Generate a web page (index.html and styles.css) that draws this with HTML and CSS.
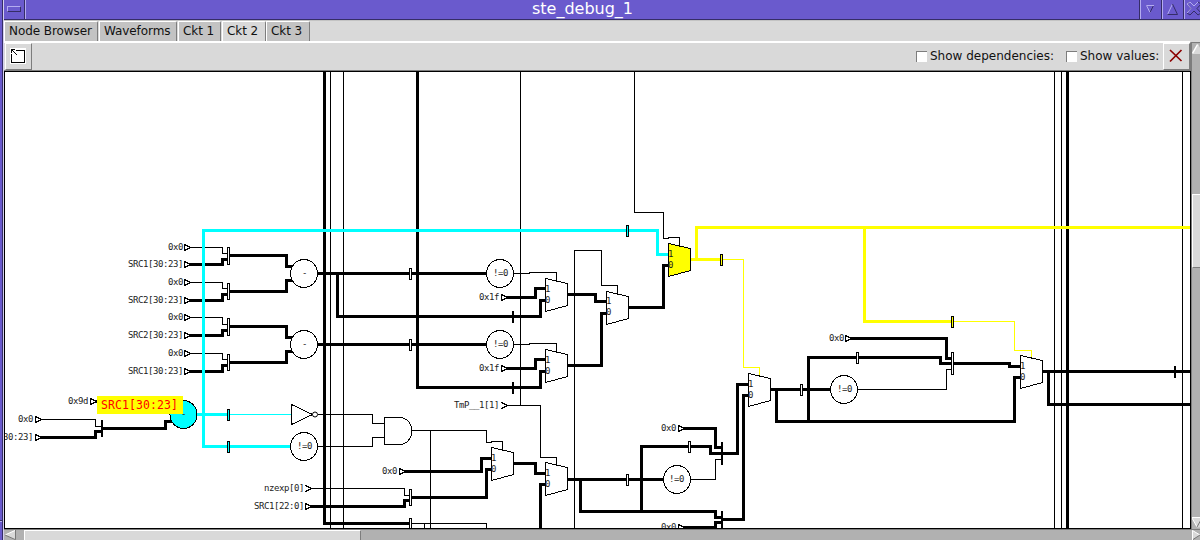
FILE: index.html
```html
<!DOCTYPE html>
<html lang="en">
<head>
<meta charset="utf-8">
<title>ste_debug_1</title>
<link rel="stylesheet" href="styles.css">
</head>
<body>
<div class="window">
  <div class="frame-edge"><i class="notch"></i></div>
  <div class="main">
    <header class="titlebar">
      <div class="wbtn menu"><i></i></div>
      <h1 class="title"><span>ste_debug_1</span></h1>
      <div class="wbtn"><svg width="20" height="19"><path d="M5.500 5.500H12.500L9 12.500" class="lo2"/><path d="M13 5.500H5.500L9 12.500" class="hi"/></svg></div>
      <div class="wbtn"><svg width="20" height="19"><path d="M4.500 14.500L9.500 4" class="hi"/><path d="M9.500 4L14.500 14.500H4.500" class="lo2"/></svg></div>
      <div class="wbtn"><svg width="20" height="19"><path d="M2 4L5 2L9 6L13 2L16 4L12 8.500L16 13L13 15L9 11L5 15L2 13L6 8.500Z" class="lo2"/><path d="M6 8.500L2 4L5 2L9 6L13 2M2 13L6 8.500" class="hi"/></svg></div>
    </header>
    <nav class="tabs">
      <div class="tab t1"><span>Node Browser</span></div>
      <div class="tab t2"><span>Waveforms</span></div>
      <div class="tab t3"><span>Ckt 1</span></div>
      <div class="tab t4 active"><span>Ckt 2</span></div>
      <div class="tab t5"><span>Ckt 3</span></div>
    </nav>
    <div class="workspace">
      <div class="left-col">
        <div class="toolbar">
          <div class="tool"><svg width="16" height="16" shape-rendering="crispEdges"><path d="M0 0H16V16H0Z" fill="#fff"/><path d="M6 2.500H14.500V14.500H1.500V6" fill="none" stroke="#000"/><path d="M1 1h4v1h-4zM1 1h1v4h-1zM2 2h1v1h-1zM3 3h1v1h-1zM4 4h1v1h-1zM5 5h1v1h-1zM6 6h1v1h-1z" fill="#000"/></svg></div>
          <div class="spacer"></div>
          <label class="check c1"><i></i><span>Show dependencies:</span></label>
          <label class="check c2"><i></i><span>Show values:</span></label>
          <div class="close"><svg width="14" height="14"><path d="M1 1L12.500 12M12.500 1L1 12.500" stroke="#8b0000" stroke-width="1.700"/></svg></div>
        </div>
        <svg class="canvas" width="1187" height="458" viewBox="4 71 1187 458">
          <defs>
            <rect id="bar" x="-1" y="-5" width="2" height="11"/>
            <path id="tick" d="M0 -5V7" stroke-width="2"/>
            <path id="mux" d="M0 0L22 5V27L0 33Z"/>
            <path id="pin" d="M0 -3L6 0L0 3Z"/>
            <ellipse id="node" cx="-.5" rx="13.500" ry="14"/>
          </defs>
          <g transform="translate(.5 .5)">
            <!-- single-bit nets -->
            <g class="net thin">
              <path d="M330 71V529M343 71V529M520 71V405M1054 71V529M1061 71V529M1182 71V529"/>
              <path d="M190 247H222V253H227M190 282H222V288H227M190 317H222V324H227M190 353H222V359H227"/>
              <path d="M512 273H529V272H556V281M512 344H529V343H556V352"/>
              <path d="M574 529V250H601V285H617V294M634 71V212H663V238H668V237H679V246"/>
              <path d="M317 414H372V423H384M316 446H372V437H384M411 430H486V442H491V441H502V450M430 430V529"/>
              <path d="M311 488H404V495H409M411 523H486V529M424 523V529M507 405H540V457H556V465"/>
              <path d="M41 419H95V426H101M689 479H715V459H721M856 389H946V369H951"/>
            </g>
            <!-- multi-bit buses -->
            <g class="net bus">
              <path d="M324 71V523H410M417 71V387H540V371H545M1067 71V529"/>
              <path d="M188 264H222V259H227M188 300H222V294H227M188 335H222V330H227M188 371H222V365H227"/>
              <path d="M229 255H286V266H292M229 291H286V280H292M229 326H286V337H292M229 362H286V351H292"/>
              <path d="M316 273H487M316 344H487M337 273V316H540V300H545"/>
              <path d="M506 297H535V288H545M506 368H535V359H545"/>
              <path d="M566 294H595V301H606M566 365H601V313H606M627 307H663V265H668"/>
              <path d="M403 471H481V458H491M411 497H486V469H491M512 463H535V473H545M540 529V484H545"/>
              <path d="M310 506H404V500H409M40 437H95V431H101M102 428H165V421H172M94 401H98"/>
              <path d="M566 479H664M580 479V511H715V517H721M641 511V446H710V453H737V384H748"/>
              <path d="M682 428H715V447H721M682 527H715V522H721M722 519H743V395H748"/>
              <path d="M769 389H831M776 389V421H1014V377H1020M808 421V357H940V363H951"/>
              <path d="M850 338H946V358H951M953 363H1009V366H1020M1041 371H1191M1048 371V404H1191"/>
            </g>
            <!-- selected nets -->
            <g class="net bus cyan"><path d="M291 446H203V230H657V254H668M195 414H229"/></g>
            <path class="net thin cyan" d="M229 414H291"/>
            <g class="net bus yellow"><path d="M689 259H721M696 259V227H1190M864 227V321H952"/></g>
            <path class="net thin yellow" d="M722 259H743V367H759V375M953 321H1014V350H1031V358"/>
            <!-- net markers -->
            <g class="shape">
              <use href="#bar" x="410" y="273"/><use href="#bar" x="410" y="344"/><use href="#bar" x="410" y="523"/>
              <use href="#bar" x="627" y="479"/><use href="#bar" x="689" y="446"/><use href="#bar" x="801" y="389"/><use href="#bar" x="857" y="357"/>
              <path d="M227 247h2v17h-2zM227 283h2v16h-2zM227 318h2v17h-2zM227 354h2v16h-2zM409 489h2v16h-2zM951 352h2v22h-2z"/>
            </g>
            <g class="shape sel-cyan"><use href="#bar" x="228" y="414"/><use href="#bar" x="228" y="446"/><use href="#bar" x="627" y="230"/></g>
            <g class="shape sel-yellow"><use href="#bar" x="721" y="259"/><use href="#bar" x="952" y="321"/></g>
            <g class="tick"><use href="#tick" x="512.500" y="315.500"/><use href="#tick" x="512.500" y="386.500"/><use href="#tick" x="1174.500" y="370.500"/>
              <path d="M101.500 419.500V436.500M721.500 441.500V464.500M721.500 510.500V529"/></g>
            <!-- gates -->
            <g class="shape">
              <use href="#node" x="304" y="273"/><use href="#node" x="304" y="344"/><use href="#node" x="500" y="273"/><use href="#node" x="500" y="344"/>
              <use href="#node" x="304" y="446"/><use href="#node" x="677" y="479"/><use href="#node" x="844" y="389"/>
              <use href="#mux" x="545" y="278"/><use href="#mux" x="545" y="349"/><use href="#mux" x="606" y="291"/><use href="#mux" x="491" y="447"/>
              <use href="#mux" x="545" y="462"/><use href="#mux" x="748" y="373"/><use href="#mux" x="1020" y="355"/>
              <path d="M291 404V424L312 414ZM384 417H399A12.500 13.500 0 0 1 399 444H384Z"/><circle class="bubble" cx="314.500" cy="414" r="2.500"/>
              <use href="#pin" x="184" y="247"/><use href="#pin" x="184" y="264"/><use href="#pin" x="184" y="282"/><use href="#pin" x="184" y="300"/>
              <use href="#pin" x="184" y="317"/><use href="#pin" x="184" y="335"/><use href="#pin" x="184" y="353"/><use href="#pin" x="184" y="371"/>
              <use href="#pin" x="501" y="297"/><use href="#pin" x="501" y="368"/><use href="#pin" x="399" y="471"/><use href="#pin" x="305" y="506"/>
              <use href="#pin" x="35" y="419"/><use href="#pin" x="35" y="437"/><use href="#pin" x="90" y="401"/><use href="#pin" x="678" y="428"/>
              <use href="#pin" x="678" y="527"/><use href="#pin" x="845" y="338"/>
              <path d="M501 402L507 405L501 408M305 485L311 488L305 491"/>
            </g>
            <use href="#mux" x="668" y="243" class="shape sel-yellow"/>
            <use href="#node" x="183.500" y="414" class="shape sel-cyan"/>
          </g>
          <g class="lbl">
            <text x="168" y="250">0x0</text><text x="128" y="267">SRC1[30:23]</text>
            <text x="168" y="285">0x0</text><text x="128" y="303">SRC2[30:23]</text>
            <text x="168" y="320">0x0</text><text x="128" y="338">SRC2[30:23]</text>
            <text x="168" y="356">0x0</text><text x="128" y="374">SRC1[30:23]</text>
            <text x="68" y="404">0x9d</text><text x="18" y="422">0x0</text><text x="-22" y="440">SRC1[30:23]</text>
            <text x="479" y="300">0x1f</text><text x="479" y="371">0x1f</text><text x="454" y="408">TmP__1[1]</text>
            <text x="382" y="474">0x0</text><text x="264" y="491">nzexp[0]</text><text x="254" y="509">SRC1[22:0]</text>
            <text x="661" y="431">0x0</text><text x="661" y="530">0x0</text><text x="829" y="341">0x0</text>
            <text x="302" y="276">-</text><text x="302" y="347">-</text><text x="181" y="417">-</text>
            <text x="493" y="276">!=0</text><text x="493" y="347">!=0</text><text x="297" y="449">!=0</text><text x="669" y="482">!=0</text><text x="837" y="392">!=0</text>
            <text x="545" y="292">1</text><text x="545" y="303">0</text><text x="545" y="363">1</text><text x="545" y="374">0</text>
            <text x="606" y="304">1</text><text x="606" y="315">0</text><text x="668" y="257">1</text><text x="668" y="268">0</text>
            <text x="491" y="461">1</text><text x="491" y="472">0</text><text x="545" y="476">1</text><text x="545" y="487">0</text>
            <text x="748" y="387">1</text><text x="748" y="398">0</text><text x="1020" y="369">1</text><text x="1020" y="380">0</text>
          </g>
          <rect x="97" y="396" width="86" height="18" fill="#ff0"/>
          <text class="tip" x="101" y="408.500">SRC1[30:23]</text>
          <rect class="border" x="4.500" y="71.500" width="1186" height="457"/>
        </svg>
      </div>
      <div class="vscroll">
        <svg class="arrow" width="20" height="11"><path d="M0 0H20V11H0Z" fill="#d9d9d9"/><path d="M0 0H20V11H10L6 1L1 11H0Z" fill="#b1b1b1"/><path d="M1 11L6 1L11 11Z" fill="#d9d9d9"/><path d="M0.500 10.500L5.500 1.500" stroke="#fff" stroke-width="1.500"/></svg>
        <div class="vthumb"></div>
        <svg class="arrow down" width="20" height="11"><path d="M0 0.500H20L10 10.500H5Z" fill="#d9d9d9"/><path d="M0 .5H20M0 1L5 10" stroke="#fff"/><path d="M5 10L10 1" stroke="#777"/></svg>
      </div>
    </div>
    <div class="hscroll">
      <svg class="arrow" width="20" height="10"><path d="M1 5L11 0V10Z" fill="#d9d9d9"/><path d="M1 5L11 0.500" stroke="#fff"/><path d="M1 5L11 9.500H11.500V0" stroke="#777" fill="none"/></svg>
      <div class="hthumb"></div>
      <svg class="arrow right" width="8" height="10"><path d="M0 0V10L8 5Z" fill="#d9d9d9"/><path d="M.5 10V.5L8 5" stroke="#fff" fill="none"/><path d="M1 9.500L8 5" stroke="#777"/></svg>
    </div>
  </div>
</div>
</body>
</html>
```
FILE: styles.css
```css
* { box-sizing: border-box; }
body { margin: 0; width: 1200px; height: 540px; overflow: hidden; background: #d9d9d9; font-family: "DejaVu Sans", sans-serif; }
svg { display: block; flex: none; }
.window { display: flex; width: 1200px; height: 540px; overflow: hidden; }
.frame-edge { width: 4px; flex: none; background: #6a5acd; border-right: 1px solid #d4cfee; box-shadow: inset -1px 0 #352d67; padding-top: 520px; }
.notch { display: block; width: 2px; height: 2px; background: #352d67; border-bottom: 1px solid #b4acf0; }
.main { width: 1196px; flex: none; display: flex; flex-direction: column; }

.titlebar { display: flex; width: 1202px; height: 20px; flex: none; background: #6a5acd; border-bottom: 1px solid #352d67; }
.wbtn { width: 22px; height: 19px; flex: none; border-right: 1px solid #352d67; border-left: 1px solid #b4acf0; overflow: hidden; }
.wbtn.menu { width: 21px; border-left: 0; padding: 6px 0 0 3px; }
.wbtn.menu i { display: block; width: 14px; height: 6px; border: 1px solid #b4acf0; border-right-color: #352d67; border-bottom-color: #352d67; }
.hi { fill: none; stroke: #b4acf0; }
.lo2 { fill: none; stroke: #352d67; }
.title { flex: 1; margin: 0; border-left: 1px solid #b4acf0; border-right: 1px solid #352d67; color: #fff; font-size: 16px; font-weight: 400; line-height: 18px; text-align: center; }

.tabs { display: flex; height: 21px; flex: none; background: #d9d9d9; border-top: 1px solid #c3c3c3; }
.tab { height: 20px; background: #c3c3c3; border-top: 1px solid #fff; border-left: 1px solid #fff; border-right: 1px solid #7d7d7d; border-top-right-radius: 2px; font-size: 12px; letter-spacing: -0.08px; line-height: 19px; color: #111; padding-left: 4px; white-space: nowrap; }
.tab.active { background: #d9d9d9; height: 22px; }
.t1 { width: 94px; margin-right: 1px; }
.t2 { width: 78px; margin-right: 1px; }
.t3 { width: 43px; margin-right: 1px; }
.t4 { width: 44px; }
.t5 { width: 44px; }

.workspace { display: flex; height: 488px; flex: none; }
.left-col { width: 1187px; flex: none; }
.toolbar { display: flex; height: 30px; background: #d9d9d9; border-top: 2px solid #fff; border-bottom: 1px solid #7d7d7d; border-right: 1px solid #7d7d7d; }
.tool { width: 27px; height: 27px; margin: 0 0 0 1px; border: 1px solid #fff; border-right-color: #7d7d7d; border-bottom-color: #7d7d7d; padding: 4px 0 0 4px; }
.spacer { flex: 1; }
.check { display: flex; align-items: center; font-size: 12px; color: #111; white-space: nowrap; height: 26px; }
.check i { width: 11px; height: 11px; background: #fff; border-top: 1px solid #7d7d7d; border-left: 1px solid #7d7d7d; margin-right: 3px; }
.c1 { width: 150px; }
.c2 { width: 97px; }
.close { width: 27px; height: 27px; border: 1px solid #fff; border-right-color: #7d7d7d; border-bottom-color: #7d7d7d; padding: 5px 0 0 5px; }

.canvas { background: #fff; overflow: hidden; }
.net { fill: none; stroke: #000; shape-rendering: crispEdges; }
.thin { stroke-width: 1px; }
.bus { stroke-width: 3px; }
.net.cyan, .net .cyan { stroke: #0ff; }
.net.yellow { stroke: #ff0; }
.shape { fill: #fff; stroke: #000; stroke-width: 1px; shape-rendering: crispEdges; }
.bubble { shape-rendering: geometricPrecision; }
.sel-cyan { fill: #0ff; }
.sel-yellow { fill: #ff0; }
.tick { stroke: #000; stroke-width: 2px; shape-rendering: crispEdges; }
.lbl { font-family: "DejaVu Sans Mono", monospace; font-size: 9px; letter-spacing: -0.42px; fill: #222; }
.tip { font-family: "DejaVu Sans Mono", monospace; font-size: 11.5px; letter-spacing: 0.08px; fill: #f00; }
.border { fill: none; stroke: #000; shape-rendering: crispEdges; }

.vscroll { width: 9px; background: #b1b1b1; border-left: 1px solid #7d7d7d; border-top: 1px solid #7d7d7d; margin-top: 1px; display: flex; flex-direction: column; overflow: hidden; }
.vthumb { height: 74px; width: 20px; margin-top: 140px; margin-bottom: auto; background: #d9d9d9; border: 1px solid #fff; border-bottom-color: #7d7d7d; }
.down { margin-bottom: 1px; }
.hscroll { display: flex; flex: 1; background: #b1b1b1; border-top: 1px solid #7d7d7d; overflow: hidden; }
.hthumb { width: 337px; height: 20px; background: #d9d9d9; border: 1px solid #fff; border-right-color: #7d7d7d; }
.right { margin-left: auto; }
```
